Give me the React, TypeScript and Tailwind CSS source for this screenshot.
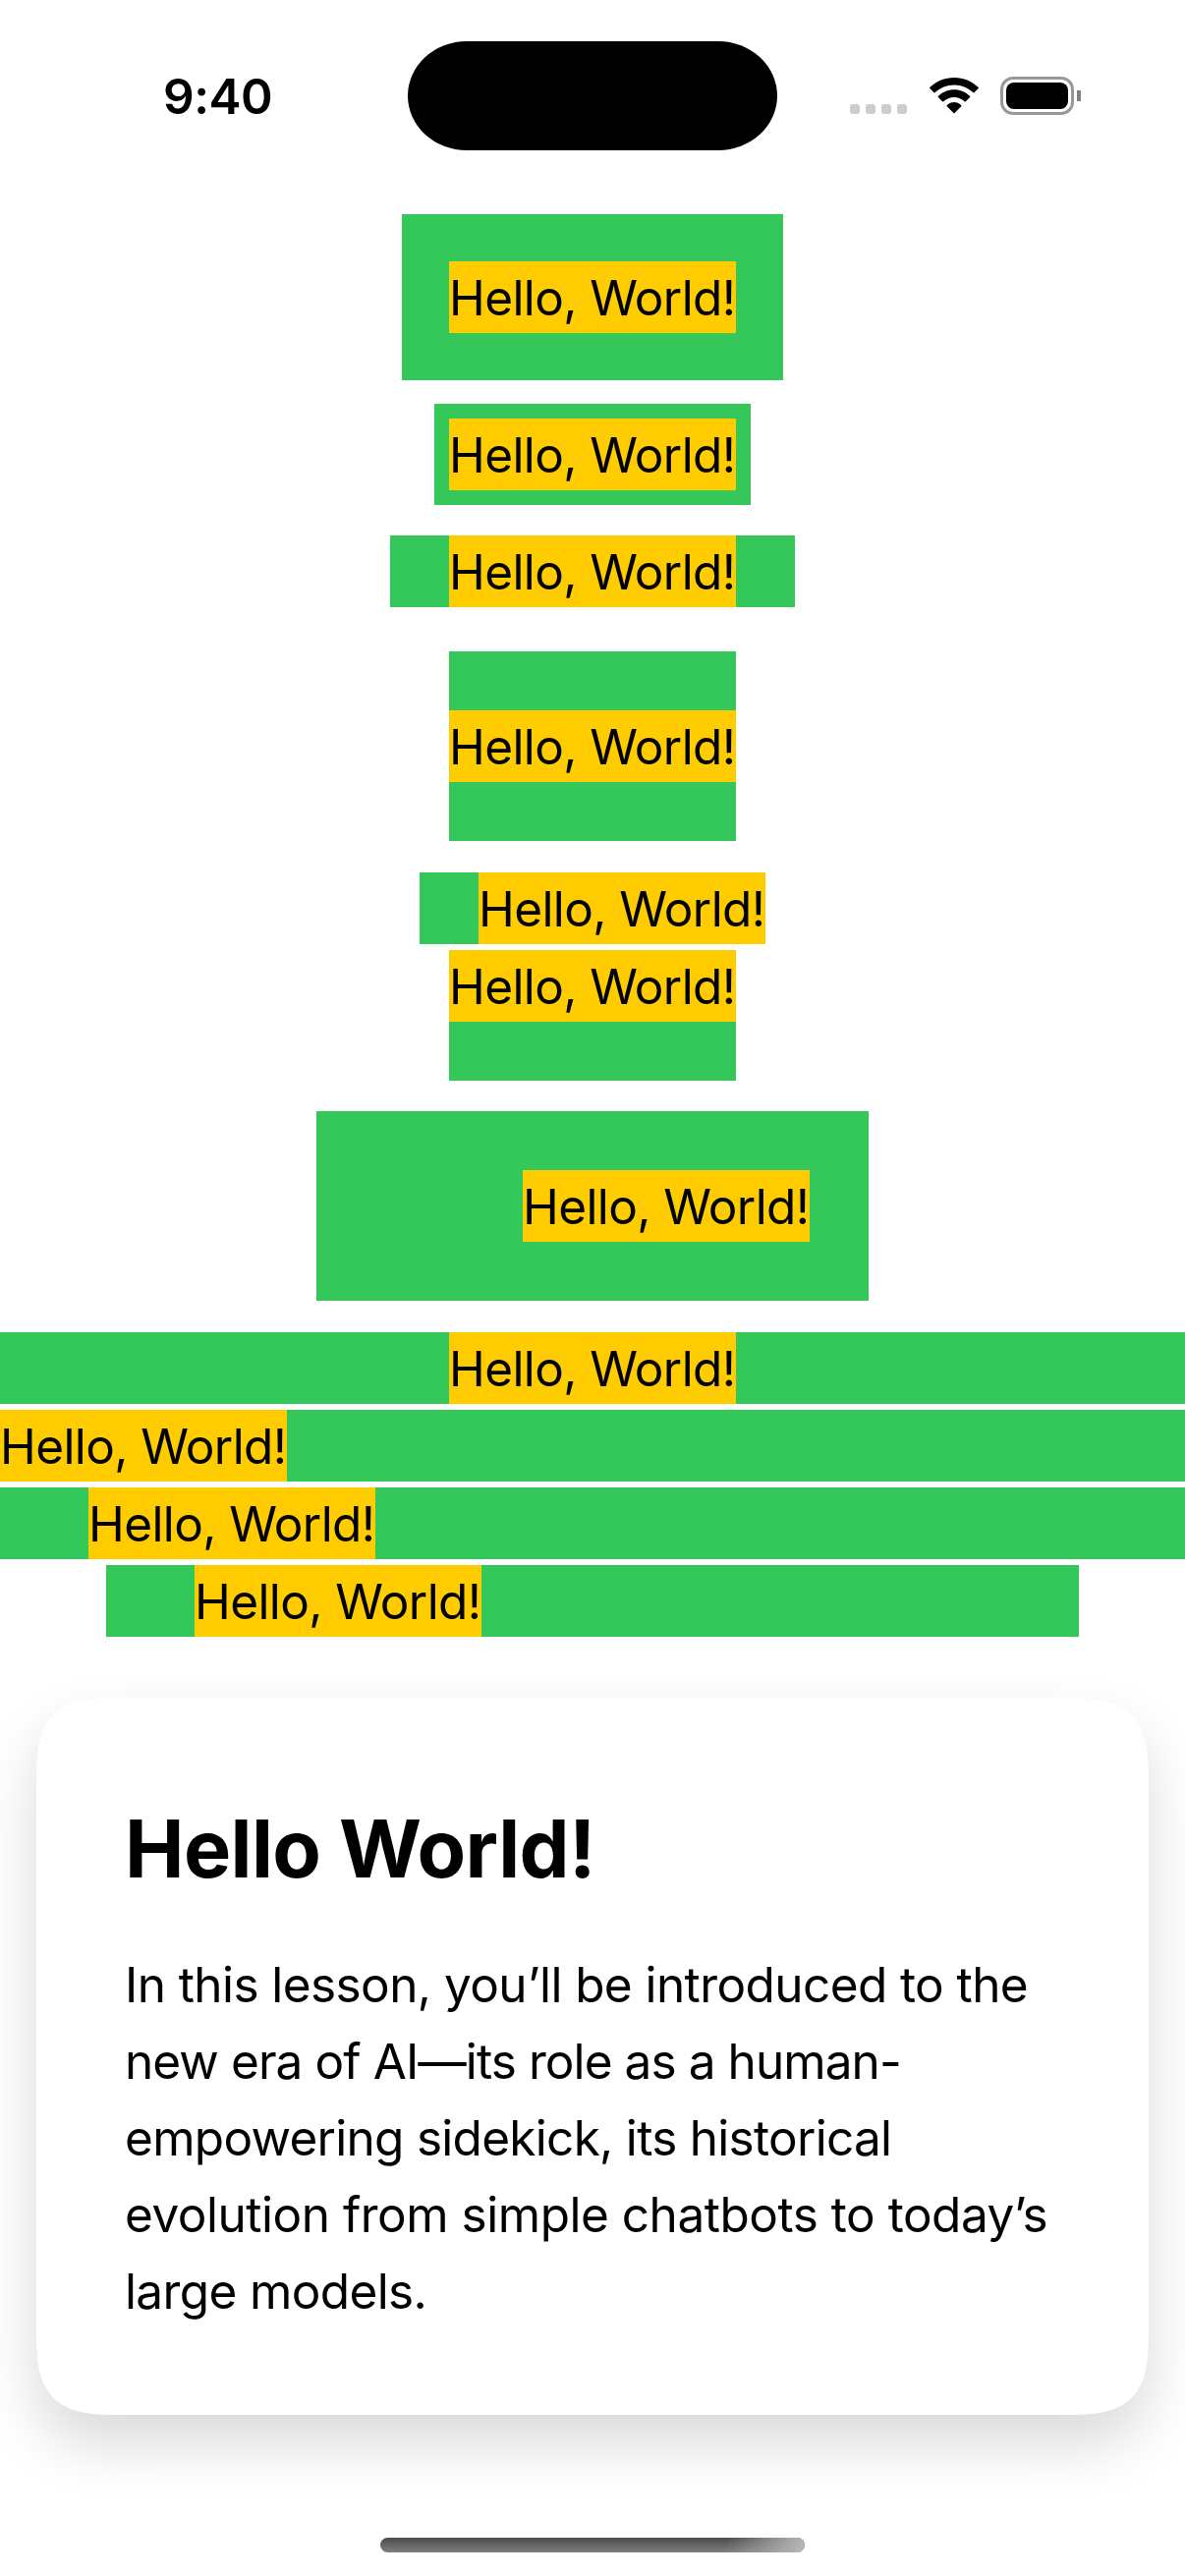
import React from "react";

function StatusBar() {
  return (
    <header className="relative flex h-[218px] w-full items-start justify-between">
      <div className="ml-[166px] mt-[62px] text-[49.5px] font-semibold leading-[72px] tracking-[-0.47px]">
        9:40
      </div>
      <div className="absolute left-[415px] top-[41.5px] h-[111px] w-[376px] rounded-[60px/55.5px] bg-black" />
      <div className="mr-[106px] mt-[78px] flex h-[39px] items-start">
        <div className="mr-[70.5px] mt-7 flex gap-1.5">
          <i className="size-2.5 rounded-[3px] bg-[#cccccc]" />
          <i className="size-2.5 rounded-[3px] bg-[#cccccc]" />
          <i className="size-2.5 rounded-[3px] bg-[#cccccc]" />
          <i className="-mr-12 size-2.5 rounded-[3px] bg-[#cccccc]" />
        </div>
        <svg className="mt-px h-[37px] w-[50px]" viewBox="0 0 50 37" fill="#000">
          <path d="M25 0C34.5 0 43.2 3.7 49.6 9.8Q50.2 10.5 49.6 11.1L45.4 15.2Q44.9 15.6 44.3 15.1C39.2 10.3 32.5 7.4 25 7.4S10.8 10.3 5.7 15.1Q5.1 15.6 4.6 15.2L.4 11.1Q-.2 10.5 .4 9.8C6.8 3.7 15.5 0 25 0Z" />
          <path d="M25 12.2C31.3 12.2 37 14.7 41.1 18.8Q41.7 19.5 41.1 20.1L36.9 24.3Q36.3 24.8 35.7 24.3C32.9 21.5 29.2 19.9 25 19.9S17.1 21.5 14.3 24.3Q13.7 24.8 13.1 24.3L8.9 20.1Q8.3 19.5 8.9 18.8C13 14.7 18.7 12.2 25 12.2Z" />
          <path d="M25 25C27.7 25 30.2 26.1 32.2 27.9Q32.8 28.6 32.2 29.2L25.6 36.1Q25 36.8 24.4 36.1L17.8 29.2Q17.2 28.6 17.8 27.9C19.8 26.1 22.3 25 25 25Z" />
        </svg>
        <div className="ml-[22.5px] h-[39px] w-[75px] rounded-[13px] border-3 border-[#999999] p-[3px]">
          <div className="size-full rounded-[8px] bg-black" />
        </div>
        <div className="ml-[3px] mt-3.5 h-[11px] w-1 rounded-r-[4px/5.5px] bg-[#808080]" />
      </div>
    </header>
  );
}

function Hello({ frame }: { frame: string }) {
  return (
    <div className={`flex bg-[#34c759] ${frame}`}>
      <div className="h-[73px] w-[292px] shrink-0 whitespace-nowrap bg-[#ffcc00] text-[49.5px] leading-[74px] tracking-[-0.62px]">
        Hello, World!
      </div>
    </div>
  );
}

export default function App() {
  return (
    <div className="flex h-[2622px] w-[1206px] flex-col items-center overflow-hidden bg-white font-[Inter,sans-serif] text-black">
      <StatusBar />
      <Hello frame="p-12" />
      <Hello frame="mt-6 p-[15px]" />
      <Hello frame="mt-[31px] px-[60px]" />
      <Hello frame="mt-[45px] py-[60px]" />
      <Hello frame="mt-8 pl-[60px]" />
      <Hello frame="mt-1.5 pb-[60px]" />
      <Hello frame="mt-[31px] py-[60px] pl-[210px] pr-[60px]" />
      <Hello frame="mt-8 w-full justify-center" />
      <Hello frame="mt-1.5 w-full" />
      <Hello frame="mt-1.5 w-full pl-[90px]" />
      <Hello frame="mt-1.5 w-[990px] pl-[90px]" />

      <section className="mt-[62px] h-[730px] w-[1132px] rounded-[60px] bg-white px-[90px] pt-[104px] shadow-[0_30px_60px_rgba(0,0,0,0.15)] supports-[corner-shape:squircle]:rounded-[92px] supports-[corner-shape:squircle]:[corner-shape:superellipse(1.73)]">
        <h1 className="text-[81px] font-bold leading-[100px] tracking-[-0.59px]">Hello World!</h1>
        <p className="mt-[49px] flex flex-col whitespace-nowrap text-[49.5px] leading-[78px]">
          <span className="tracking-[-0.58px]">In this lesson, you’ll be introduced to the</span>
          <span className="tracking-[-0.92px]">new era of AI—its role as a human-</span>
          <span className="tracking-[-0.71px]">empowering sidekick, its historical</span>
          <span className="tracking-[-0.48px]">evolution from simple chatbots to today’s</span>
          <span className="tracking-[-0.63px]">large models.</span>
        </p>
      </section>

      <div className="mt-[125px] h-[15px] w-[432px] overflow-hidden rounded-full bg-linear-to-b from-[#4a4b4a] to-[#7f7f7f]">
        <div className="ml-auto h-full w-20 bg-linear-to-r from-[#b8b8b8]/0 to-[#b8b8b8]" />
      </div>
    </div>
  );
}
